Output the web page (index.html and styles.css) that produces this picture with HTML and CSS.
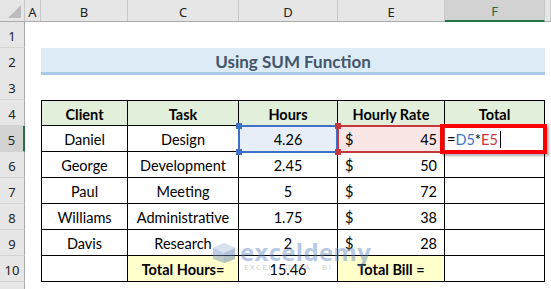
FILE: index.html
```html
<!DOCTYPE html>
<html lang="en">
<head>
    <meta charset="UTF-8">
    <title>Using SUM Function</title>
    <link rel="stylesheet" href="styles.css">
</head>
<body>

    <div class="sheet">
        <!-- column headers -->
        <div class="row hdr">
            <div class="corner"><span class="tri"></span></div>
            <div class="ch">A</div>
            <div class="ch">B</div>
            <div class="ch">C</div>
            <div class="ch">D</div>
            <div class="ch">E</div>
            <div class="ch on">F</div>
            <div class="ch"></div>
        </div>

        <div class="row">
            <div class="rh">1</div>
        </div>

        <div class="row">
            <div class="rh">2</div>
            <div></div>
            <div class="title">Using SUM Function</div>
        </div>

        <div class="row">
            <div class="rh">3</div>
        </div>

        <div class="row">
            <div class="rh">4</div>
            <div></div>
            <div class="t head top first">Client</div>
            <div class="t head top">Task</div>
            <div class="t head top">Hours</div>
            <div class="t head top">Hourly Rate</div>
            <div class="t head top">Total</div>
        </div>

        <div class="row">
            <div class="rh on">5</div>
            <div></div>
            <div class="t first">Daniel</div>
            <div class="t">Design</div>
            <div class="t fill-blue">4.26</div>
            <div class="t money fill-red"><span>$</span><span>45</span></div>
            <div class="t edit"><span class="ref-d">D5</span>*<span class="ref-e">E5</span><span class="caret"></span></div>
        </div>

        <div class="row">
            <div class="rh">6</div>
            <div></div>
            <div class="t first">George</div>
            <div class="t">Development</div>
            <div class="t">2.45</div>
            <div class="t money"><span>$</span><span>50</span></div>
            <div class="t"></div>
        </div>

        <div class="row">
            <div class="rh">7</div>
            <div></div>
            <div class="t first">Paul</div>
            <div class="t">Meeting</div>
            <div class="t">5</div>
            <div class="t money"><span>$</span><span>72</span></div>
            <div class="t"></div>
        </div>

        <div class="row">
            <div class="rh">8</div>
            <div></div>
            <div class="t first">Williams</div>
            <div class="t">Administrative</div>
            <div class="t">1.75</div>
            <div class="t money"><span>$</span><span>38</span></div>
            <div class="t"></div>
        </div>

        <div class="row">
            <div class="rh">9</div>
            <div></div>
            <div class="t first">Davis</div>
            <div class="t">Research</div>
            <div class="t">2</div>
            <div class="t money"><span>$</span><span>28</span></div>
            <div class="t"></div>
        </div>

        <div class="row">
            <div class="rh">10</div>
            <div></div>
            <div class="t first"></div>
            <div class="t head total">Total Hours=</div>
            <div class="t">15.46</div>
            <div class="t head total">Total Bill =</div>
            <div class="t"></div>
        </div>

        <div class="row">
            <div class="rh"></div>
        </div>

        <!-- selection overlays -->
        <div class="pick pick-d">
            <span class="knob tl"></span><span class="knob bl"></span>
        </div>
        <div class="pick pick-e">
            <span class="knob tl"></span><span class="knob bl"></span>
        </div>
        <div class="active-box"></div>

        <!-- watermark -->
        <div class="watermark">
            <svg width="26" height="22" viewBox="0 0 26 22">
                <polygon points="13,1 24,6 24,17 13,21 2,17 2,6" fill="#6f8fbf"/>
                <polygon points="13,1 24,6 13,11 2,6" fill="#a9bfdc"/>
                <polygon points="13,11 24,6 24,17 13,21" fill="#5a7bb0"/>
            </svg>
            <div class="wm-text">
                <div class="wm-name">exceldemy</div>
                <div class="wm-sub">EXCEL · DATA · BI</div>
            </div>
        </div>
    </div>

</body>
</html>
```

FILE: styles.css
```css
body {
    margin: 0;
    background: #fff;
    font-family: 'Lato', 'Open Sans', sans-serif;
    font-size: 14.5px;
    color: #000;
}

.sheet {
    position: relative;
    width: 551px;
    height: 289px;
    overflow: hidden;
}

.row {
    display: grid;
    grid-template-columns: 25px 16px 87px 111px 99px 107px 100px 1fr;
    height: 26px;
}

/* headers */
.hdr {
    height: 22px;
    background: #e6e6e6;
    border-bottom: 1px solid #ababab;
    box-sizing: border-box;
}

.corner {
    position: relative;
    border-right: 1px solid #c8c8c8;
}

.tri {
    position: absolute;
    right: 3px;
    bottom: 3px;
    width: 0;
    height: 0;
    border-left: 13px solid transparent;
    border-bottom: 13px solid #bcbcbc;
}

.ch {
    display: flex;
    align-items: center;
    justify-content: center;
    font-family: 'Noto Sans', sans-serif;
    font-size: 13px;
    color: #222;
    border-right: 1px solid #c8c8c8;
    padding-top: 2px;
}

.ch.on {
    background: #d2d2d2;
    color: #1d6b3a;
    border-bottom: 2px solid #217346;
    margin-bottom: -1px;
}

.rh {
    display: flex;
    align-items: center;
    justify-content: center;
    font-family: 'Noto Sans', sans-serif;
    font-size: 13px;
    color: #222;
    background: #e6e6e6;
    border-right: 1px solid #ababab;
    border-bottom: 1px solid #d2d2d2;
    box-sizing: border-box;
    padding-top: 2px;
}

.rh.on {
    background: #d2d2d2;
    border-right: 2px solid #217346;
}

/* title band */
.title {
    grid-column: 3 / 8;
    display: flex;
    align-items: center;
    justify-content: center;
    background: #ddebf7;
    border-bottom: 3px solid #a9c9e8;
    height: 27px;
    box-sizing: border-box;
    font-weight: 700;
    font-size: 17px;
    color: #44546a;
    padding-top: 2px;
}

/* table cells */
.t {
    display: flex;
    align-items: center;
    justify-content: center;
    border-right: 1px solid #000;
    border-bottom: 1px solid #000;
    box-sizing: border-box;
    padding-top: 2px;
    white-space: nowrap;
}

.t.top {
    border-top: 1px solid #000;
}

.t.first {
    border-left: 1px solid #000;
}

.head {
    font-weight: 700;
    background: #e2efda;
}

.total {
    background: #ffffcc;
}

.money {
    justify-content: space-between;
    padding: 2px 7px 0 7px;
}

.fill-blue {
    background: #e8eef8;
}

.fill-red {
    background: #fbe6e6;
}

.edit {
    justify-content: flex-start;
    padding-left: 2px;
}

.edit::before {
    content: "=";
}

.ref-d {
    color: #3d72c8;
}

.ref-e {
    color: #d0333a;
}

.caret {
    display: inline-block;
    width: 1px;
    height: 17px;
    background: #000;
    margin-left: 2px;
}

/* selection overlays */
.pick {
    position: absolute;
    top: 125px;
    height: 28px;
    box-sizing: border-box;
}

.pick-d {
    left: 238px;
    width: 100px;
    border: 2px solid #3d70c6;
}

.pick-e {
    left: 337px;
    width: 108px;
    border: 2px solid #c4383d;
}

.knob {
    position: absolute;
    left: -4px;
    width: 6px;
    height: 6px;
}

.pick-d .knob {
    background: #3d70c6;
}

.pick-e .knob {
    background: #c4383d;
}

.knob.tl {
    top: -4px;
}

.knob.bl {
    bottom: -4px;
}

.active-box {
    position: absolute;
    left: 440px;
    top: 124px;
    width: 107px;
    height: 30px;
    box-sizing: border-box;
    border: 4px solid #f00;
    box-shadow: 2px 2px 2px rgba(0, 0, 0, 0.3);
}

/* watermark */
.watermark {
    position: absolute;
    left: 211px;
    top: 242px;
    display: flex;
    align-items: flex-start;
    gap: 3px;
    opacity: 0.45;
}

.wm-text {
    display: flex;
    flex-direction: column;
}

.wm-name {
    font-family: 'Open Sans', sans-serif;
    font-weight: 700;
    font-size: 24px;
    line-height: 20px;
    color: #5f86c0;
    letter-spacing: 0.3px;
}

.wm-sub {
    font-family: 'Open Sans', sans-serif;
    font-size: 8px;
    line-height: 10px;
    letter-spacing: 1.5px;
    color: #8a8a8a;
    padding-left: 4px;
}
```
